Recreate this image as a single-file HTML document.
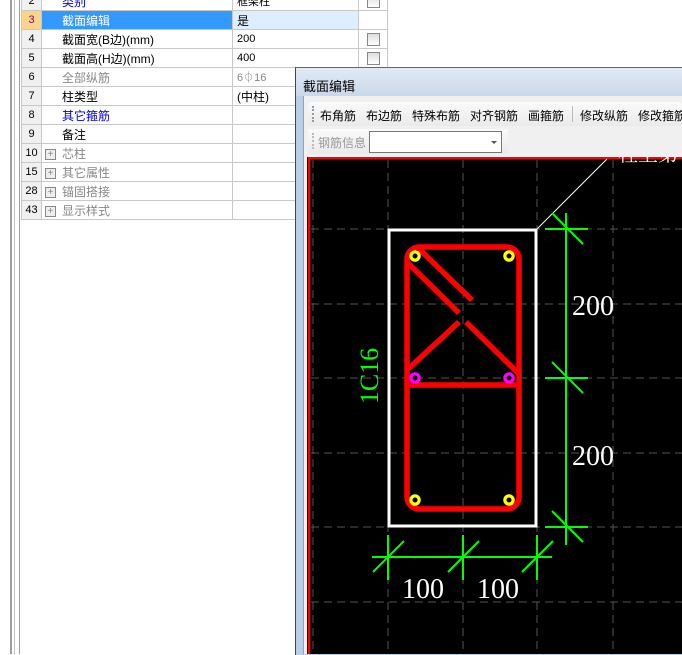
<!DOCTYPE html>
<html><head><meta charset="utf-8"><style>
body{margin:0;width:682px;height:654px;overflow:hidden;background:#fff;position:relative;font-family:"Liberation Sans","Noto Sans CJK SC",sans-serif;font-size:12px}
.abs{position:absolute;white-space:nowrap}
table{border-collapse:collapse;position:absolute;left:21px;top:-9px}
td{height:18px;border:1px solid #c8c8c8;padding:0;white-space:nowrap}
td.n{width:19px;background:#f0f0f0;text-align:center;font-size:11px}
td.k{width:170px;padding-left:20px}
td.v{width:121px;padding-left:4px;font-size:11px}
td.c{width:28px}
.cb{display:inline-block;width:11px;height:11px;border:1px solid #888;background:linear-gradient(#ddd,#fff);margin-left:8px;vertical-align:middle}
.pl{display:inline-block;width:9px;height:9px;border:1px solid #888;background:#eee;font-size:10px;line-height:9px;text-align:center;margin:0 6px 0 3px;vertical-align:middle}
.g{color:#888}.b{color:#0000e0}
.t{position:absolute;top:107px;font-size:12px;white-space:nowrap}
</style></head><body>
<div class="abs" style="left:10px;top:0;width:2px;height:654px;background:#a0a0a0"></div>
<div class="abs" style="left:14px;top:0;width:1px;height:654px;background:#c0c0c0"></div>
<div class="abs" style="left:19px;top:0;width:1px;height:654px;background:#a0a0a0"></div>
<table>
<tr><td class="n">2</td><td class="k b">类别</td><td class="v">框架柱</td><td class="c"><span class="cb"></span></td></tr>
<tr><td class="n" style="background:#fbd48c;color:#800080">3</td><td class="k" style="background:#3399ff;color:#fff">截面编辑</td><td class="v" style="background:#dceeff;font-size:12px">是</td><td class="c"></td></tr>
<tr><td class="n">4</td><td class="k">截面宽(B边)(mm)</td><td class="v">200</td><td class="c"><span class="cb"></span></td></tr>
<tr><td class="n">5</td><td class="k">截面高(H边)(mm)</td><td class="v">400</td><td class="c"><span class="cb"></span></td></tr>
<tr><td class="n">6</td><td class="k g">全部纵筋</td><td class="v g">6⏀16</td><td class="c"></td></tr>
<tr><td class="n">7</td><td class="k">柱类型</td><td class="v" style="font-size:12px">(中柱)</td><td class="c"></td></tr>
<tr><td class="n">8</td><td class="k b">其它箍筋</td><td class="v"></td><td class="c"></td></tr>
<tr><td class="n">9</td><td class="k">备注</td><td class="v"></td><td class="c"></td></tr>
<tr><td class="n">10</td><td class="k g" style="padding-left:0"><span class="pl">+</span>芯柱</td><td class="v"></td><td class="c"></td></tr>
<tr><td class="n">15</td><td class="k g" style="padding-left:0"><span class="pl">+</span>其它属性</td><td class="v"></td><td class="c"></td></tr>
<tr><td class="n">28</td><td class="k g" style="padding-left:0"><span class="pl">+</span>锚固搭接</td><td class="v"></td><td class="c"></td></tr>
<tr><td class="n">43</td><td class="k g" style="padding-left:0"><span class="pl">+</span>显示样式</td><td class="v"></td><td class="c"></td></tr>
</table>
<div class="abs" style="left:295px;top:67px;width:387px;height:587px;background:#b9cfe8;border-left:1px solid #444;border-top:1px solid #666"></div>
<div class="abs" style="left:296px;top:68px;width:386px;height:28px;background:linear-gradient(#e2eaf3,#c9d9ea)"></div>
<div class="abs" style="left:303px;top:76px;font-size:13px;color:#000">截面编辑</div>
<div class="abs" style="left:303px;top:96px;width:379px;height:558px;background:#f0f0f0;border-left:1px solid #8aa;"></div>
<div class="abs" style="left:308px;top:102px;width:374px;height:24px;background:linear-gradient(#fafafa,#eaeaea);border-radius:3px"></div>
<div class="abs" style="left:312px;top:106px;width:2px;height:16px;border-left:2px dotted #999"></div>
<div class="t" style="left:320px">布角筋</div>
<div class="t" style="left:366px">布边筋</div>
<div class="t" style="left:412px">特殊布筋</div>
<div class="t" style="left:470px">对齐钢筋</div>
<div class="t" style="left:528px">画箍筋</div>
<div class="abs" style="left:572px;top:106px;width:1px;height:16px;background:#bbb"></div>
<div class="t" style="left:580px">修改纵筋</div>
<div class="t" style="left:638px">修改箍筋</div>
<div class="abs" style="left:308px;top:129px;width:200px;height:25px;background:linear-gradient(#fafafa,#eaeaea)"></div>
<div class="abs" style="left:312px;top:133px;width:2px;height:16px;border-left:2px dotted #bbb"></div>
<div class="abs" style="left:318px;top:134px;font-size:12px;color:#999">钢筋信息</div>
<div class="abs" style="left:369px;top:131px;width:131px;height:20px;border:1px solid #777;background:#fff"></div>
<div class="abs" style="left:491px;top:141px;width:0;height:0;border-left:3px solid transparent;border-right:3px solid transparent;border-top:3px solid #555"></div>
<svg class="abs" style="left:307px;top:157px" width="375" height="497" viewBox="307 157 375 497">
<rect x="307" y="157" width="375" height="497" fill="#000"/>
<rect x="309" y="158" width="375" height="500" fill="none" stroke="#f00" stroke-width="2.5"/>
<g stroke="#555" stroke-width="1" stroke-dasharray="8,5">
<line x1="313" y1="160" x2="313" y2="654"/><line x1="388" y1="160" x2="388" y2="654"/><line x1="463" y1="160" x2="463" y2="654"/><line x1="537" y1="160" x2="537" y2="654"/><line x1="613" y1="160" x2="613" y2="654"/>
<line x1="311" y1="229" x2="682" y2="229"/><line x1="311" y1="304" x2="682" y2="304"/><line x1="311" y1="378" x2="682" y2="378"/><line x1="311" y1="453" x2="682" y2="453"/><line x1="311" y1="527" x2="682" y2="527"/><line x1="311" y1="602" x2="682" y2="602"/>
</g>
<rect x="389" y="230" width="147" height="296" fill="none" stroke="#fff" stroke-width="3"/>
<line x1="537" y1="229" x2="607" y2="159" stroke="#fff" stroke-width="1"/>
<text x="618" y="161" fill="#fff" font-family="Liberation Serif,Noto Serif CJK SC,serif" font-size="20">柱上第</text>
<g stroke="#f00" stroke-width="5.5" fill="none">
<rect x="407" y="247" width="112" height="262" rx="12"/>
<line x1="407" y1="385" x2="519" y2="385"/>
<line x1="408" y1="263" x2="459" y2="313"/>
<line x1="419" y1="249" x2="472" y2="300"/>
<line x1="408" y1="369" x2="459" y2="322"/>
<line x1="466" y1="322" x2="518" y2="373"/>
</g>
<g stroke-width="1.5">
<circle cx="415" cy="256" r="5" stroke="#ff0" fill="#ff0"/><circle cx="509" cy="256" r="5" stroke="#ff0" fill="#ff0"/>
<circle cx="415" cy="500" r="5" stroke="#ff0" fill="#ff0"/><circle cx="509" cy="500" r="5" stroke="#ff0" fill="#ff0"/>
<circle cx="415" cy="378" r="5" stroke="#f0f" fill="#f0f"/><circle cx="509" cy="378" r="5" stroke="#f0f" fill="#f0f"/>
</g>
<g fill="#000"><circle cx="415" cy="256" r="2.5"/><circle cx="509" cy="256" r="2.5"/><circle cx="415" cy="500" r="2.5"/><circle cx="509" cy="500" r="2.5"/><circle cx="415" cy="378" r="2.5"/><circle cx="509" cy="378" r="2.5"/></g>
<g stroke="#0f0" stroke-width="2">
<line x1="566" y1="213" x2="566" y2="545"/>
<line x1="545" y1="229" x2="588" y2="229"/><line x1="545" y1="378" x2="588" y2="378"/><line x1="545" y1="527" x2="588" y2="527"/>
<line x1="552" y1="213" x2="583" y2="244"/><line x1="552" y1="362" x2="583" y2="393"/><line x1="552" y1="511" x2="583" y2="542"/>
<line x1="372" y1="557" x2="552" y2="557"/>
<line x1="388" y1="535" x2="388" y2="580"/><line x1="463" y1="535" x2="463" y2="580"/><line x1="537" y1="535" x2="537" y2="580"/>
<line x1="373" y1="572" x2="404" y2="541"/><line x1="448" y1="572" x2="479" y2="541"/><line x1="522" y1="572" x2="553" y2="541"/>
</g>
<g fill="#fff" font-family="Liberation Serif,serif" font-size="28">
<text x="572" y="315">200</text><text x="572" y="465">200</text>
<text x="402" y="598">100</text><text x="477" y="598">100</text>
</g>
<text transform="translate(378,376) rotate(-90)" text-anchor="middle" fill="#0f0" font-family="Liberation Serif,serif" font-size="26">1C16</text>
</svg>
</body></html>
